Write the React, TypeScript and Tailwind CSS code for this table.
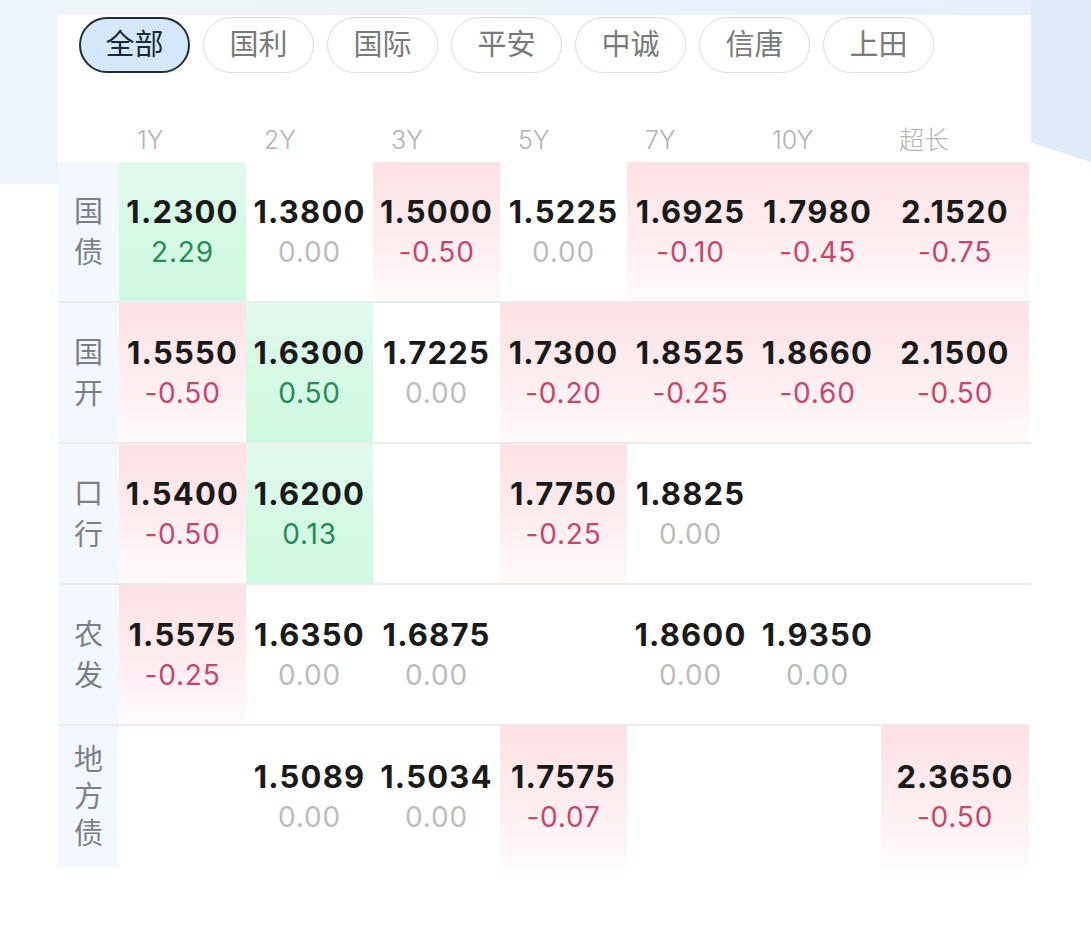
import React from 'react';

type Cell = { value: string; change: string } | null;

interface BondRow {
  label: string[];
  cells: Cell[];
}

const tabs = ['全部', '国利', '国际', '平安', '中诚', '信唐', '上田'];
const terms = ['1Y', '2Y', '3Y', '5Y', '7Y', '10Y', '超长'];

const rows: BondRow[] = [
  {
    label: ['国', '债'],
    cells: [
      { value: '1.2300', change: '2.29' },
      { value: '1.3800', change: '0.00' },
      { value: '1.5000', change: '-0.50' },
      { value: '1.5225', change: '0.00' },
      { value: '1.6925', change: '-0.10' },
      { value: '1.7980', change: '-0.45' },
      { value: '2.1520', change: '-0.75' },
    ],
  },
  {
    label: ['国', '开'],
    cells: [
      { value: '1.5550', change: '-0.50' },
      { value: '1.6300', change: '0.50' },
      { value: '1.7225', change: '0.00' },
      { value: '1.7300', change: '-0.20' },
      { value: '1.8525', change: '-0.25' },
      { value: '1.8660', change: '-0.60' },
      { value: '2.1500', change: '-0.50' },
    ],
  },
  {
    label: ['口', '行'],
    cells: [
      { value: '1.5400', change: '-0.50' },
      { value: '1.6200', change: '0.13' },
      null,
      { value: '1.7750', change: '-0.25' },
      { value: '1.8825', change: '0.00' },
      null,
      null,
    ],
  },
  {
    label: ['农', '发'],
    cells: [
      { value: '1.5575', change: '-0.25' },
      { value: '1.6350', change: '0.00' },
      { value: '1.6875', change: '0.00' },
      null,
      { value: '1.8600', change: '0.00' },
      { value: '1.9350', change: '0.00' },
      null,
    ],
  },
  {
    label: ['地', '方', '债'],
    cells: [
      null,
      { value: '1.5089', change: '0.00' },
      { value: '1.5034', change: '0.00' },
      { value: '1.7575', change: '-0.07' },
      null,
      null,
      { value: '2.3650', change: '-0.50' },
    ],
  },
];

const gridCols = 'grid grid-cols-[61px_repeat(6,127px)_148px]';

function trend(change: string) {
  const n = parseFloat(change);
  if (n > 0) return 'up';
  if (n < 0) return 'down';
  return 'flat';
}

function RateCell({ cell }: { cell: Cell }) {
  if (!cell) return <div />;
  const t = trend(cell.change);
  const bg =
    t === 'down'
      ? 'bg-linear-to-b from-[#fde1e4] via-[#fdecee] to-[#fffbfb]'
      : t === 'up'
        ? 'bg-linear-to-b from-[#e2f9ec] via-[#d5f9e5] to-[#d0f9e3]'
        : '';
  const color = t === 'down' ? 'text-[#c8466e]' : t === 'up' ? 'text-[#268c55]' : 'text-[#bcbcbc]';

  return (
    <div className={`flex flex-col items-center justify-center ${bg}`}>
      <span className="text-[31px] leading-[41px] font-bold tracking-[1.2px] text-[#1a1a1a]">{cell.value}</span>
      <span className={`text-[28px] leading-[41px] tracking-[0.8px] ${color}`}>{cell.change}</span>
    </div>
  );
}

export default function App() {
  return (
    <div
      className="relative h-[926px] w-full overflow-hidden bg-white"
      style={{ fontFamily: 'Inter, "Noto Sans CJK SC", sans-serif' }}
    >
      {/* backdrop behind the card */}
      <div className="absolute top-0 left-0 h-[184px] w-[1031px] bg-linear-to-r from-[#eff5fd] to-[#e6effb]" />
      <div className="absolute top-0 right-0 h-[162px] w-[60px] bg-[#e0ebfa] [clip-path:polygon(0_0,100%_0,100%_100%,0_88%)]" />

      <section className="relative mt-[15px] ml-[58px] w-[973px] bg-white">
        <div className="flex gap-[13px] pt-[2px] pl-[21px]">
          {tabs.map((tab, i) => (
            <button
              key={tab}
              className={
                i === 0
                  ? 'flex h-[56px] w-[111px] items-center justify-center rounded-full border-2 border-[#1f2c3a] bg-[#d5e8f9] text-[29px] text-[#1b2836]'
                  : 'flex h-[56px] w-[111px] items-center justify-center rounded-full border-[1.5px] border-[#dcdcdc] bg-white text-[29px] text-[#7a7a7a]'
              }
            >
              {tab}
            </button>
          ))}
        </div>

        <div className={`${gridCols} h-[89px] items-end pb-[7px]`}>
          <div />
          {terms.map((term) => (
            <div key={term} className="pl-[18px] text-[25px] leading-[30px] font-light text-[#b2b2b2]">
              {term}
            </div>
          ))}
        </div>

        {rows.map((row, r) => (
          <div
            key={row.label.join('')}
            className={`${gridCols} h-[141px] ${r < rows.length - 1 ? 'border-b-2 border-[#ececec]' : ''}`}
          >
            <div className="flex flex-col items-center justify-center bg-[#f3f8fe] text-[29px] text-[#7b8088]">
              {row.label.map((ch) => (
                <span key={ch} className={row.label.length > 2 ? 'leading-[37px]' : 'leading-[41px]'}>
                  {ch}
                </span>
              ))}
            </div>
            {row.cells.map((cell, c) => (
              <RateCell key={c} cell={cell} />
            ))}
          </div>
        ))}
      </section>
    </div>
  );
}
